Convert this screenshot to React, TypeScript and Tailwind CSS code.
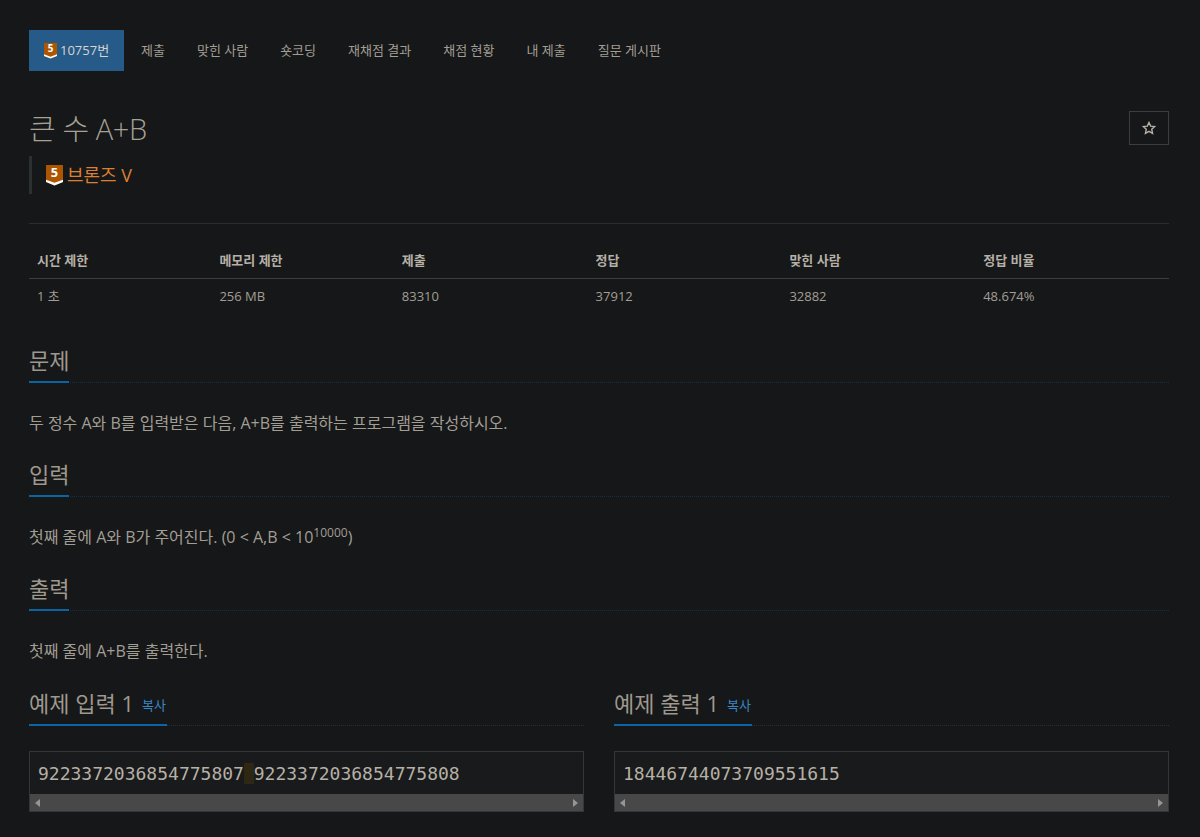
const sans = "font-['Open_Sans','Noto_Sans_CJK_KR',sans-serif]";

function TierIcon({ size }: { size: number }) {
    return (
        <svg width={size} height={size * 1.2} viewBox="0 0 20 24" className="shrink-0 overflow-visible">
            <path d="M0 0H20V20L10 24L0 20Z" fill="#ad5600" />
            <path d="M0 17.5L10 21L20 17.5V20L10 24L0 20Z" fill="#fff" />
            <text x="10" y="14.5" textAnchor="middle" fontSize="15" fontWeight="700" fill="#fff" fontFamily="Open Sans, sans-serif">
                5
            </text>
        </svg>
    );
}

const Sample = ({ title, children }: { title: string; children: React.ReactNode }) => {
    return (
        <div className="flex-1 min-w-0">
            <div className="border-b border-dotted border-[#2a2e30] h-[40px]">
                <div className="inline-flex items-start h-[40px] border-b-2 border-[#0b65a5] text-[#9f988d] pr-px">
                    <span className="text-[22px] leading-[34px]">{title}</span>
                    <span className="ml-[8px] mt-[8px] text-[13px] leading-[22px] text-[#3a87c5]">복사</span>
                </div>
            </div>
            <div className="mt-[25px] border border-[#33373a] bg-[#181a1b]">
                <div className="px-2 pt-[10px] h-[42px] font-['DejaVu_Sans_Mono',monospace] text-[18px] leading-[24px] text-[#b6b0a6] whitespace-pre">
                    {children}
                </div>
                <div className="flex items-center justify-between h-[17px] bg-[#484848] px-[5px]">
                    <span className="border-y-[4px] border-r-[5px] border-y-transparent border-r-[#969696]" />
                    <span className="border-y-[4px] border-l-[5px] border-y-transparent border-l-[#969696]" />
                </div>
            </div>
        </div>
    );
};

const SectionTitle = ({ title }: { title: string }) => {
    return (
        <div className="border-b border-dotted border-[#15303f] h-[40px]">
            <div className="inline-block h-[40px] border-b-2 border-[#0b65a5] text-[22px] leading-[34px] text-[#9f988d]">{title}</div>
        </div>
    );
};

export default function App() {
    const tabs = ["제출", "맞힌 사람", "숏코딩", "재채점 결과", "채점 현황", "내 제출", "질문 게시판"];
    const stats = [
        ["시간 제한", "1 초", "w-[182.4px]"],
        ["메모리 제한", "256 MB", "w-[182.4px]"],
        ["제출", "83310", "w-[193.8px]"],
        ["정답", "37912", "w-[193.8px]"],
        ["맞힌 사람", "32882", "w-[193.8px]"],
        ["정답 비율", "48.674%", "w-[193.8px]"],
    ];

    return (
        <div className={`h-[837px] overflow-hidden bg-[#151719] pl-[29px] pt-[30px] pr-[31px] ${sans}`}>
            <nav className="flex h-[41px] text-[13px] text-[#a39e93]">
                <div className="flex items-center gap-[3px] bg-[#265a88] pl-[15px] w-[95px] text-[#d8d4cf]">
                    <TierIcon size={13} />
                    <span>10757번</span>
                </div>
                <div className="flex items-center gap-[32px] pl-[17px]">
                    {tabs.map((tab) => (
                        <span key={tab} className="whitespace-nowrap">{tab}</span>
                    ))}
                </div>
            </nav>

            <div className="flex justify-between items-start mt-[33px]">
                <h1 className="text-[29px] font-light leading-[50px] tracking-[-0.4px] text-[#a8a195]">큰 수 A+B</h1>
                <div className="flex items-center justify-center w-[40px] h-[34px] mt-[7px] border border-[#3a3e40] text-[#b6b0a6]">
                    <svg width="14" height="14" viewBox="0 0 24 24" fill="none" stroke="currentColor" strokeWidth="2.4">
                        <path d="M12 2.5l2.9 6.3 6.9.8-5.1 4.7 1.4 6.8-6.1-3.4-6.1 3.4 1.4-6.8-5.1-4.7 6.9-.8z" />
                    </svg>
                </div>
            </div>

            <div className="flex items-center mt-[2px] h-[38px] border-l-[3px] border-[#2d3032] pl-[14px] text-[18px] text-[#dd7f33]">
                <TierIcon size={17} />
                <span className="ml-[4px]">브론즈 V</span>
            </div>

            <div className="mt-[29px] border-t border-[#2a2e30]" />

            <div className="mt-[19px] text-[13px] text-[#a39e93]">
                <div className="flex h-[36px] items-center border-b border-[#3a3e40] font-bold text-[#b6b0a6]">
                    {stats.map(([label, , width]) => (
                        <div key={label} className={`${width} pl-[8px]`}>{label}</div>
                    ))}
                </div>
                <div className="flex h-[36px] items-center">
                    {stats.map(([label, value, width]) => (
                        <div key={label} className={`${width} pl-[8px]`}>{value}</div>
                    ))}
                </div>
            </div>

            <div className="mt-[28px]">
                <SectionTitle title="문제" />
                <p className="mt-[29px] h-[22px] text-[16px] leading-[22px] text-[#a39e93]">
                    두 정수 A와 B를 입력받은 다음, A+B를 출력하는 프로그램을 작성하시오.
                </p>
            </div>
            <div className="mt-[23px]">
                <SectionTitle title="입력" />
                <p className="mt-[29px] h-[22px] text-[16px] leading-[22px] text-[#a39e93]">
                    첫째 줄에 A와 B가 주어진다. (0 &lt; A,B &lt; 10<sup className="text-[12px]">10000</sup>)
                </p>
            </div>
            <div className="mt-[23px]">
                <SectionTitle title="출력" />
                <p className="mt-[29px] h-[22px] text-[16px] leading-[22px] text-[#a39e93]">첫째 줄에 A+B를 출력한다.</p>
            </div>

            <div className="flex gap-[30px] mt-[24px]">
                <Sample title="예제 입력 1">
                    9223372036854775807<span className="bg-[#2e2714] tracking-[-1px]"> </span>9223372036854775808
                </Sample>
                <Sample title="예제 출력 1">18446744073709551615</Sample>
            </div>
        </div>
    );
}
